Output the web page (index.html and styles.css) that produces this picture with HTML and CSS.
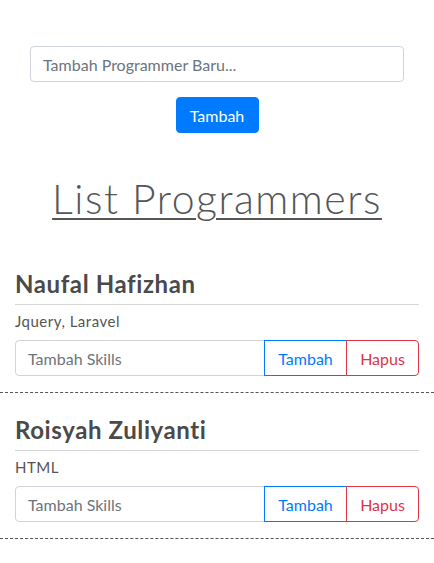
FILE: index.html
```html
<!DOCTYPE html>
<html>
<head>
<meta charset="utf-8">
<link rel="stylesheet" href="styles.css">
</head>
<body>
<div class="add-form">
  <input class="field field-main" type="text" placeholder="Tambah Programmer Baru...">
  <button class="btn-primary">Tambah</button>
</div>
<h1 class="title">List Programmers</h1>
<div class="list">
  <div class="programmer">
    <h4 class="name">Naufal Hafizhan</h4>
    <hr class="rule">
    <p class="skills">Jquery, Laravel</p>
    <div class="group">
      <input class="field field-group" type="text" placeholder="Tambah Skills">
      <button class="btn-outline btn-blue">Tambah</button>
      <button class="btn-outline btn-red">Hapus</button>
    </div>
  </div>
  <div class="programmer">
    <h4 class="name">Roisyah Zuliyanti</h4>
    <hr class="rule">
    <p class="skills">HTML</p>
    <div class="group">
      <input class="field field-group" type="text" placeholder="Tambah Skills">
      <button class="btn-outline btn-blue">Tambah</button>
      <button class="btn-outline btn-red">Hapus</button>
    </div>
  </div>
</div>
</body>
</html>
```
FILE: styles.css
```css
* { box-sizing: border-box; }
body {
  margin: 0;
  font-family: "Lato", "Noto Sans", sans-serif;
  color: #4a4a4a;
  background: #fff;
}
.add-form {
  display: flex;
  flex-direction: column;
  align-items: center;
  gap: 15px;
  padding: 46px 30px 0;
}
.field {
  font-family: inherit;
  font-size: 16px;
  height: 36px;
  padding: 0 12px;
  border: 1px solid #ced4da;
  color: #495057;
  background: #fff;
  outline: none;
}
.field::placeholder { color: #6c757d; }
.field-main {
  width: 100%;
  border-radius: 4px;
}
.btn-primary {
  font-family: inherit;
  font-size: 16px;
  height: 36px;
  width: 83px;
  border: 1px solid #007bff;
  background: #007bff;
  color: #fff;
  border-radius: 4px;
  padding: 0;
}
.title {
  margin: 42px 0 24px;
  text-align: center;
  font-size: 41px;
  font-weight: 300;
  letter-spacing: 1.5px;
  line-height: 48px;
  color: #555;
  text-decoration: underline;
  text-decoration-thickness: 2px;
  text-underline-offset: 4px;
}
.programmer {
  padding: 22px 15px 16px;
  border-bottom: 1px dashed #555;
}
.name {
  margin: 0;
  font-size: 24px;
  line-height: 29px;
  font-weight: 700;
  letter-spacing: 0.6px;
  color: #4a4a4a;
}
.rule {
  margin: 6px 0 0;
  border: 0;
  border-top: 1px solid #d6d6d6;
}
.skills {
  margin: 6px 0 8px;
  font-size: 15px;
  line-height: 21px;
  letter-spacing: 0.5px;
  color: #555;
}
.group {
  display: flex;
  height: 36px;
}
.field-group {
  flex: 1;
  min-width: 0;
  height: 36px;
  border-radius: 4px 0 0 4px;
}
.btn-outline {
  font-family: inherit;
  font-size: 16px;
  height: 36px;
  padding: 0 12px;
  background: #fff;
  border: 1px solid;
}
.btn-blue {
  width: 83px;
  margin-left: -1px;
  color: #007bff;
  border-color: #007bff;
  border-radius: 0;
}
.btn-red {
  width: 73px;
  margin-left: -1px;
  color: #dc3545;
  border-color: #dc3545;
  border-radius: 0 4px 4px 0;
}
```
